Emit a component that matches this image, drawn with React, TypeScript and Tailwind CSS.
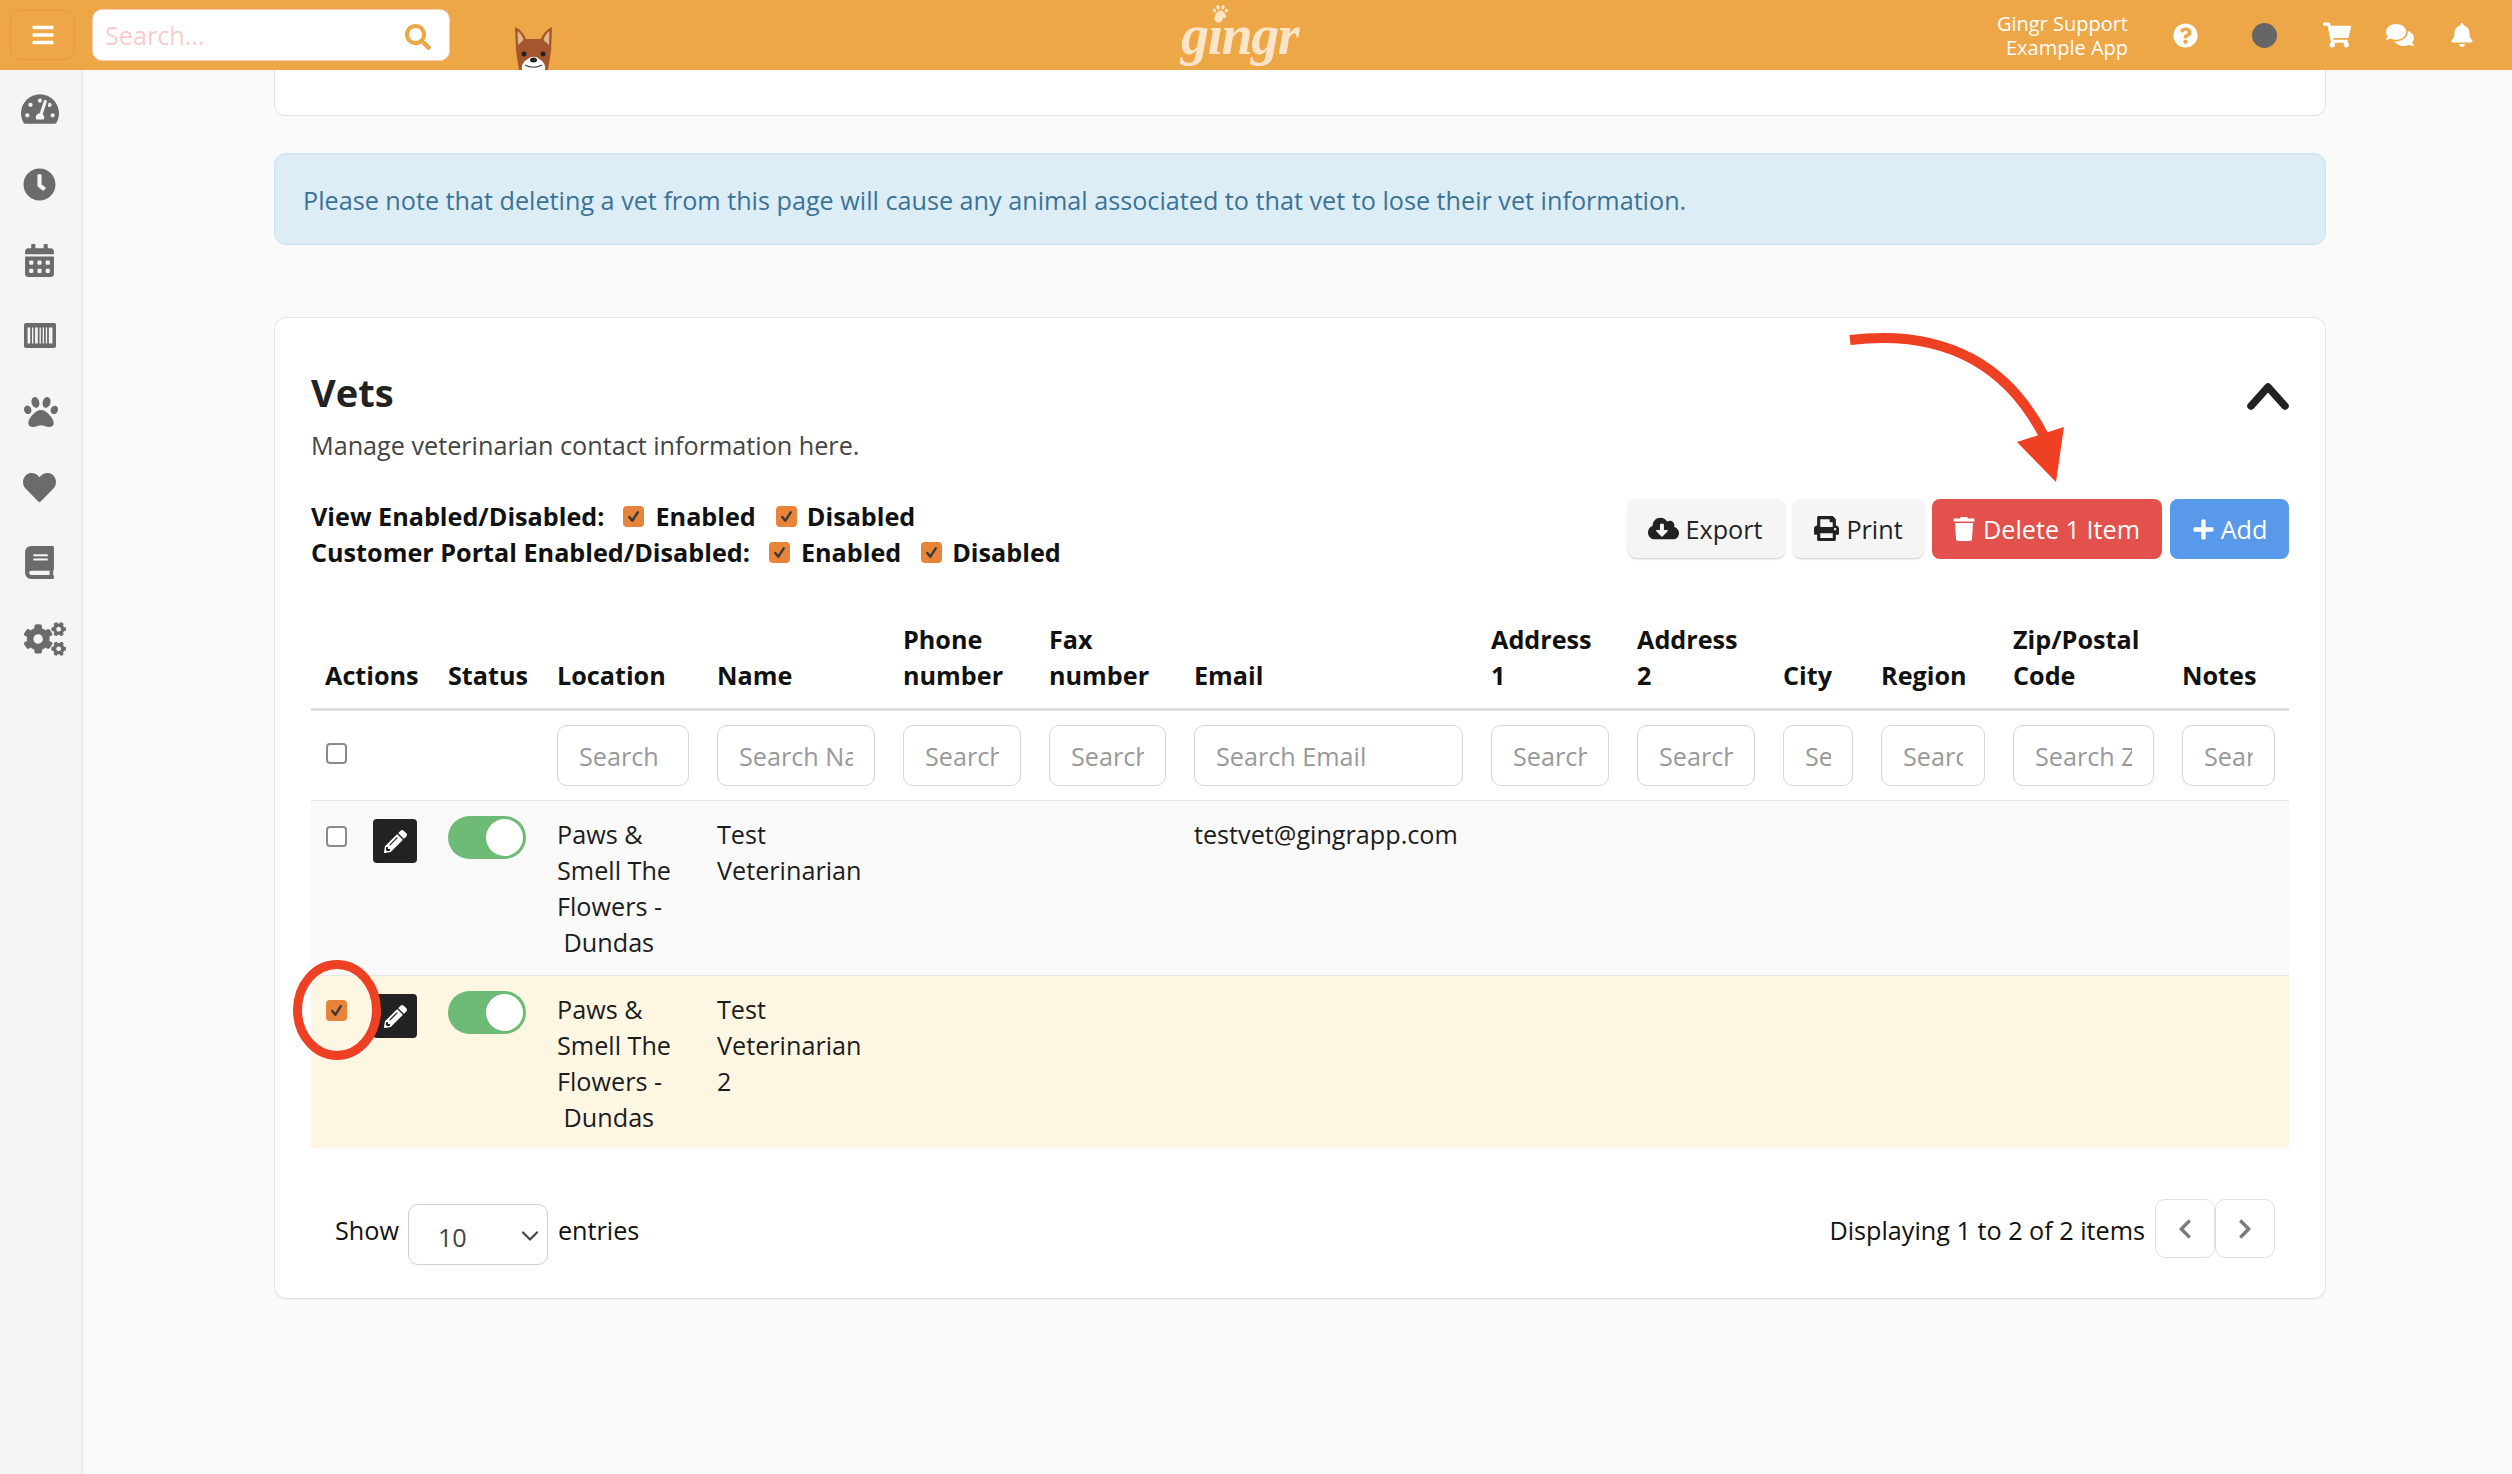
import React from "react";
import {
  FaBars, FaSearch, FaTachometerAlt, FaClock, FaCalendarAlt, FaPaw, FaHeart, FaBook, FaCogs,
  FaQuestionCircle, FaShoppingCart, FaComments, FaBell, FaCloudDownloadAlt, FaPrint, FaTrash,
  FaPlus, FaPencilAlt, FaChevronLeft, FaChevronRight,
} from "react-icons/fa";

function Barcode() {
  return (
    <svg width="32" height="25" viewBox="0 0 36 28" fill="#6b6b6b">
      <path fillRule="evenodd" d="M2 0h32a2 2 0 0 1 2 2v24a2 2 0 0 1-2 2H2a2 2 0 0 1-2-2V2a2 2 0 0 1 2-2Zm2 5v18h3V5H4Zm5 0v18h1.500V5H9Zm3.500 0v18h3V5h-3Zm5 0v18H19V5h-1.500Zm3.500 0v18h1.500V5H21Zm3.500 0v18h1.500V5h-1.500ZM28 5v18h4V5h-4Z" />
    </svg>
  );
}

function Box({ checked }: { checked?: boolean }) {
  return checked ? (
    <span className="flex h-[21px] w-[21px] shrink-0 items-center justify-center rounded-[4px] bg-[#e8833a]">
      <svg width="15" height="15" viewBox="0 0 16 16" fill="none" stroke="#3a3a3a" strokeWidth="2.600" strokeLinecap="round" strokeLinejoin="round">
        <path d="M3.500 8.500 6.800 12.500 12.500 3.500" />
      </svg>
    </span>
  ) : (
    <span className="block h-[21px] w-[21px] shrink-0 rounded-[4px] border-2 border-[#8a8a8a] bg-white" />
  );
}

function Toggle() {
  return (
    <div className="-mt-[1px] flex h-[43px] w-[78px] items-center justify-end rounded-full bg-[#6dbb76] pr-[3px]">
      <span className="block h-[37px] w-[37px] rounded-full bg-white" />
    </div>
  );
}

function EditBtn() {
  return (
    <span className="mt-[2px] flex h-[44px] w-[44px] items-center justify-center rounded-[4px] bg-[#222222] text-white">
      <FaPencilAlt size={23} />
    </span>
  );
}

function FilterLine({ label }: { label: string }) {
  return (
    <div className="flex h-[36px] items-center font-bold text-[#111]">
      <span>{label}</span>
      <span className="ml-[19px] flex items-center">
        <Box checked />
        <span className="ml-[11px]">Enabled</span>
      </span>
      <span className="ml-[20px] flex items-center">
        <Box checked />
        <span className="ml-[10px]">Disabled</span>
      </span>
    </div>
  );
}

const widths = [123, 109, 160, 186, 146, 145, 297, 146, 146, 98, 132, 169, 121];
const heads: React.ReactNode[] = [
  "Actions", "Status", "Location", "Name", "Phone number", "Fax number", "Email",
  "Address 1", "Address 2", "City", "Region", "Zip/Postal Code", "Notes",
];
const placeholders = [
  "Search Location", "Search Name", "Search Phone", "Search Fax", "Search Email", "Search Address 1",
  "Search Address 2", "Search City", "Search Region", "Search Zip", "Search Notes",
];

function Row({ name, email, checked, bg, pb }: { name: string; email?: string; checked?: boolean; bg: string; pb: string }) {
  return (
    <tr className={`${bg} border-b border-[#e6e6e6] align-top last:border-b-0`}>
      <td className="px-[14px] pt-[16px]">
        <div className="flex items-start gap-[26px] pl-[1px]">
          <span className={checked ? "mt-[8px]" : "mt-[9px]"}><Box checked={checked} /></span>
          <EditBtn />
        </div>
      </td>
      <td className="px-[14px] pt-[16px]"><Toggle /></td>
      <td className={`px-[14px] pt-[15px] ${pb}`}>Paws &amp; Smell The Flowers - {"\u00a0"}Dundas</td>
      <td className="px-[14px] pt-[15px]">{name}</td>
      <td className="px-[14px]" />
      <td className="px-[14px]" />
      <td className="px-[14px] pt-[15px]">{email}</td>
      <td className="px-[14px]" />
      <td className="px-[14px]" />
      <td className="px-[14px]" />
      <td className="px-[14px]" />
      <td className="px-[14px]" />
      <td className="px-[14px]" />
    </tr>
  );
}

export default function App() {
  return (
    <div className="relative flex h-[1474px] w-[2512px] flex-col overflow-hidden bg-[#fafafa] font-['Open_Sans',sans-serif] text-[25.2px] leading-[36px] text-[#1c1c1c]">
      {/* top bar */}
      <header className="flex h-[70px] shrink-0 items-center bg-[#eda746] pr-[38px] pl-[10px]">
        <button className="flex h-[50px] w-[65px] items-center justify-center rounded-[10px] border border-[#e59d3c] text-white">
          <FaBars size={24} />
        </button>
        <div className="ml-[17px] flex h-[52px] w-[358px] items-center justify-between rounded-[10px] border border-[#f6cbc0] bg-white pr-[18px] pl-[12px]">
          <span className="text-[#f8cccc]">Search...</span>
          <FaSearch size={26} color="#eda746" className="mt-[3px]" />
        </div>
        <svg className="mt-auto ml-[64px]" width="39" height="45" viewBox="0 0 39 45">
          <path d="M2 26 1 2c5 2 9 7 11 12h15c2-5 6-10 11-12l-1 24-3 19H5Z" fill="#a5562d" />
          <path d="M4 20 3.500 6c3 2 5 5 6 9ZM35 20l.5-14c-3 2-5 5-6 9Z" fill="#e8b48c" />
          <path d="M8 45c-1-5 2-9 6-11 2-3 9-3 11 0 4 2 7 6 6 11Z" fill="#fff" />
          <circle cx="10" cy="29" r="2.500" fill="#222" />
          <circle cx="29" cy="29" r="2.500" fill="#222" />
          <ellipse cx="19.500" cy="35" rx="3.500" ry="2.500" fill="#222" />
          <path d="M11 40c5 3 12 3 17 0" fill="none" stroke="#444" strokeWidth="1.200" />
        </svg>
        <div className="relative ml-[628px] flex h-[70px] w-[120px] items-center">
          <span className="font-['Liberation_Serif',serif] text-[56px] leading-[60px] font-bold tracking-[-1.500px] text-[#fbe5c8] italic">
            gingr
          </span>
          <FaPaw size={15} color="#fbe5c8" className="absolute top-[4px] left-[32px]" />
        </div>
        <div className="flex-1" />
        <div className="mt-[2px] text-right text-[20px] leading-[24px] text-white">
          Gingr Support
          <br />
          Example App
        </div>
        <FaQuestionCircle size={25} color="#fff" className="ml-[45px]" />
        <span className="ml-[54px] block h-[25px] w-[25px] rounded-full bg-[#666]" />
        <FaShoppingCart size={28} color="#fff" className="ml-[46px]" />
        <FaComments size={28} color="#fff" className="ml-[35px]" />
        <FaBell size={24} color="#fff" className="ml-[36px]" />
      </header>

      <div className="flex min-h-0 flex-1">
        {/* sidebar */}
        <aside className="flex w-[83px] shrink-0 flex-col border-r border-[#e4e4e4] bg-[#f5f5f5] pt-[1px] pr-[3px] text-[#6b6b6b]">
          {[
            <FaTachometerAlt size={38} />, <FaClock size={33} />, <FaCalendarAlt size={33} />, <Barcode />,
            <FaPaw size={34} className="ml-[3px]" />, <FaHeart size={33} />, <FaBook size={33} />, <FaCogs size={42} className="ml-[10px]" />,
          ].map((icon, i) => (
            <div key={i} className="flex h-[75.7px] items-center justify-center">{icon}</div>
          ))}
        </aside>

        {/* main */}
        <main className="flex min-w-0 flex-1 flex-col pr-[186px] pl-[191px]">
          <div className="h-[46px] rounded-b-[12px] border border-t-0 border-[#e3e3e3] bg-white" />
          <div className="mt-[37px] flex h-[92px] items-center rounded-[12px] border border-[#c9e4f0] bg-[#dcedf6] px-[28px] pt-[1px] text-[#3b7396]">
            Please note that deleting a vet from this page will cause any animal associated to that vet to lose their vet information.
          </div>

          <section className="relative mt-[72px] rounded-[12px] border border-[#e3e3e3] bg-white px-[36px] pt-[49px] pb-[33px] shadow-[0_1px_1px_rgba(0,0,0,0.05)]">
            <h2 className="text-[38px] leading-[50px] font-bold text-[#222]">Vets</h2>
            <p className="mt-[10px] leading-[36px] text-[#444]">Manage veterinarian contact information here.</p>

            <svg className="absolute top-[64px] right-[36px]" width="42" height="28" viewBox="0 0 42 28" fill="none" stroke="#222" strokeWidth="7.500" strokeLinecap="round" strokeLinejoin="round">
              <path d="M4 24 21 5l17 19" />
            </svg>

            <div className="mt-[35px] flex items-start justify-between">
              <div>
                <FilterLine label="View Enabled/Disabled:" />
                <FilterLine label="Customer Portal Enabled/Disabled:" />
              </div>
              <div className="mt-[1px] flex items-start gap-[8px]">
                <button className="flex h-[59px] w-[157px] items-center justify-center gap-[6px] rounded-[8px] bg-[#f5f5f5] pr-[2px] text-[#222] shadow-[0_1px_2px_rgba(0,0,0,0.2)]">
                  <FaCloudDownloadAlt size={31} />Export
                </button>
                <button className="flex h-[59px] w-[131px] items-center justify-center gap-[7px] rounded-[8px] bg-[#f5f5f5] text-[#222] shadow-[0_1px_2px_rgba(0,0,0,0.2)]">
                  <FaPrint size={25} />Print
                </button>
                <button className="flex h-[60px] w-[230px] items-center justify-center gap-[7px] rounded-[8px] bg-[#e2514c] pr-[2px] text-white">
                  <FaTrash size={24} />Delete 1 Item
                </button>
                <button className="flex h-[60px] w-[119px] items-center justify-center gap-[6px] rounded-[8px] bg-[#5899ea] text-white">
                  <FaPlus size={23} />Add
                </button>
              </div>
            </div>

            <table className="mt-[38px] w-[1978px] table-fixed border-collapse">
              <colgroup>
                {widths.map((w, i) => <col key={i} style={{ width: w }} />)}
              </colgroup>
              <thead>
                <tr className="border-b-[3px] border-[#dedede]">
                  {heads.map((h, i) => (
                    <th key={i} className="px-[14px] pt-[13px] pb-[15px] text-left align-bottom font-bold text-[#111]">{h}</th>
                  ))}
                </tr>
              </thead>
              <tbody>
                <tr className="border-b border-[#e6e6e6]">
                  <td className="px-[14px] align-top"><span className="mt-[32px] block pl-[1px]"><Box /></span></td>
                  <td className="px-[14px]" />
                  {placeholders.map((p) => (
                    <td key={p} className="px-[14px] py-[14px]">
                      <input
                        readOnly
                        placeholder={p}
                        className="block h-[61px] w-full min-w-0 rounded-[10px] border border-[#d6d6d6] bg-white px-[21px] placeholder:text-[#999] focus:outline-none"
                      />
                    </td>
                  ))}
                </tr>
                <Row bg="bg-[#f9f9f9]" name="Test Veterinarian" email="testvet@gingrapp.com" pb="pb-[15px]" />
                <Row bg="bg-[#fdf6e3]" name="Test Veterinarian 2" checked pb="pb-[13px]" />
              </tbody>
            </table>

            <div className="mt-[51px] flex items-start justify-between pr-[14px] pl-[24px]">
              <div className="mt-[5px] flex items-start text-[#111]">
                <span className="mt-[8px]">Show</span>
                <div className="ml-[9px] flex h-[61px] w-[140px] items-center justify-between rounded-[10px] border border-[#cfcfcf] pt-[2px] pr-[8px] pl-[29px] text-[#444]">
                  <span className="mt-[3px]">10</span>
                  <svg width="18" height="12" viewBox="0 0 18 12" fill="none" stroke="#444" strokeWidth="2.200" strokeLinecap="round" strokeLinejoin="round"><path d="M2 2.500 9 9.500l7-7" /></svg>
                </div>
                <span className="mt-[8px] ml-[10px]">entries</span>
              </div>
              <div className="flex items-start text-[#111]">
                <span className="mt-[13px] mr-[10px]">Displaying 1 to 2 of 2 items</span>
                <span className="flex h-[59px] w-[60px] items-center justify-center rounded-[10px] border border-[#e0e0e0] text-[#7a7a7a]"><FaChevronLeft size={22} /></span>
                <span className="flex h-[59px] w-[60px] items-center justify-center rounded-[10px] border border-[#e0e0e0] text-[#7a7a7a]"><FaChevronRight size={22} /></span>
              </div>
            </div>
          </section>
        </main>
      </div>

      {/* annotations drawn over the page */}
      <svg className="pointer-events-none absolute top-0 left-0" width="2512" height="1474" viewBox="0 0 2512 1474" fill="none">
        <path d="M1850 340C1950 328 2010 370 2044 436" stroke="#ee4023" strokeWidth="10" />
        <path d="M2017 442 2064 427 2056 482Z" fill="#ee4023" />
        <ellipse cx="337" cy="1010" rx="39.500" ry="45.500" stroke="#ee4023" strokeWidth="9" />
      </svg>
    </div>
  );
}
